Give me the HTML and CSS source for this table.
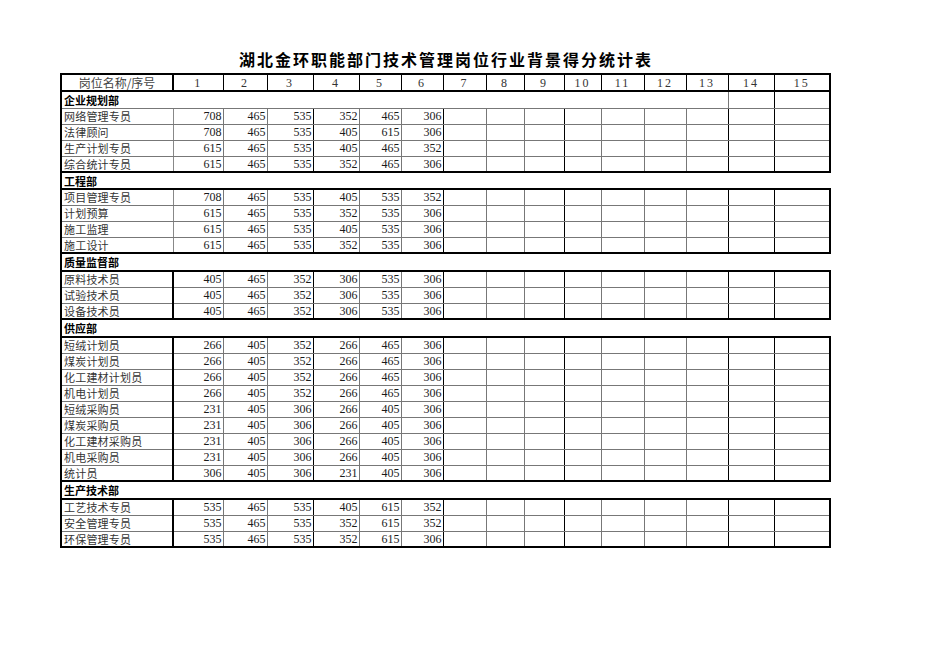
FILE: index.html
```
<!DOCTYPE html>
<html lang="zh-CN">
<head>
<meta charset="utf-8">
<title>湖北金环职能部门技术管理岗位行业背景得分统计表</title>
<link rel="stylesheet" href="styles.css">
</head>
<body>
<div class="page">
  <h1 class="title">湖北金环职能部门技术管理岗位行业背景得分统计表</h1>
  <table class="sheet">
    <colgroup>
      <col class="c-name"><col class="w50"><col class="w44"><col class="w46"><col class="w46"><col class="w42"><col class="w42"><col class="w43"><col class="w38"><col class="w40"><col class="w37"><col class="w43"><col class="w42"><col class="w42"><col class="w46"><col class="w56">
    </colgroup>
    <thead>
      <tr class="hrow">
        <th class="hname">岗位名称/序号</th>
        <th>1</th><th>2</th><th>3</th><th>4</th><th>5</th><th>6</th><th>7</th><th>8</th><th>9</th><th>10</th><th>11</th><th>12</th><th>13</th><th>14</th><th>15</th>
      </tr>
    </thead>
    <tbody class="thin">
      <tr class="srow first"><td colspan="14" class="sec">企业规划部</td><td></td><td></td></tr>
      <tr class="drow"><td class="n">网络管理专员</td><td>708</td><td>465</td><td>535</td><td>352</td><td>465</td><td>306</td><td></td><td></td><td></td><td></td><td></td><td></td><td></td><td></td><td></td></tr>
      <tr class="drow"><td class="n">法律顾问</td><td>708</td><td>465</td><td>535</td><td>405</td><td>615</td><td>306</td><td></td><td></td><td></td><td></td><td></td><td></td><td></td><td></td><td></td></tr>
      <tr class="drow"><td class="n">生产计划专员</td><td>615</td><td>465</td><td>535</td><td>405</td><td>465</td><td>352</td><td></td><td></td><td></td><td></td><td></td><td></td><td></td><td></td><td></td></tr>
      <tr class="drow last"><td class="n">综合统计专员</td><td>615</td><td>465</td><td>535</td><td>352</td><td>465</td><td>306</td><td></td><td></td><td></td><td></td><td></td><td></td><td></td><td></td><td></td></tr>
    </tbody>
    <tbody class="thin">
      <tr class="srow"><td colspan="16" class="sec open">工程部</td></tr>
      <tr class="drow"><td class="n">项目管理专员</td><td>708</td><td>465</td><td>535</td><td>405</td><td>535</td><td>352</td><td></td><td></td><td></td><td></td><td></td><td></td><td></td><td></td><td></td></tr>
      <tr class="drow"><td class="n">计划预算</td><td>615</td><td>465</td><td>535</td><td>352</td><td>535</td><td>306</td><td></td><td></td><td></td><td></td><td></td><td></td><td></td><td></td><td></td></tr>
      <tr class="drow"><td class="n">施工监理</td><td>615</td><td>465</td><td>535</td><td>405</td><td>535</td><td>306</td><td></td><td></td><td></td><td></td><td></td><td></td><td></td><td></td><td></td></tr>
      <tr class="drow last"><td class="n">施工设计</td><td>615</td><td>465</td><td>535</td><td>352</td><td>535</td><td>306</td><td></td><td></td><td></td><td></td><td></td><td></td><td></td><td></td><td></td></tr>
    </tbody>
    <tbody class="thick">
      <tr class="srow"><td colspan="16" class="sec open">质量监督部</td></tr>
      <tr class="drow"><td class="n">原料技术员</td><td>405</td><td>465</td><td>352</td><td>306</td><td>535</td><td>306</td><td></td><td></td><td></td><td></td><td></td><td></td><td></td><td></td><td></td></tr>
      <tr class="drow"><td class="n">试验技术员</td><td>405</td><td>465</td><td>352</td><td>306</td><td>535</td><td>306</td><td></td><td></td><td></td><td></td><td></td><td></td><td></td><td></td><td></td></tr>
      <tr class="drow last"><td class="n">设备技术员</td><td>405</td><td>465</td><td>352</td><td>306</td><td>535</td><td>306</td><td></td><td></td><td></td><td></td><td></td><td></td><td></td><td></td><td></td></tr>
    </tbody>
    <tbody class="thick">
      <tr class="srow"><td colspan="16" class="sec open">供应部</td></tr>
      <tr class="drow"><td class="n">短绒计划员</td><td>266</td><td>405</td><td>352</td><td>266</td><td>465</td><td>306</td><td></td><td></td><td></td><td></td><td></td><td></td><td></td><td></td><td></td></tr>
      <tr class="drow"><td class="n">煤炭计划员</td><td>266</td><td>405</td><td>352</td><td>266</td><td>465</td><td>306</td><td></td><td></td><td></td><td></td><td></td><td></td><td></td><td></td><td></td></tr>
      <tr class="drow"><td class="n">化工建材计划员</td><td>266</td><td>405</td><td>352</td><td>266</td><td>465</td><td>306</td><td></td><td></td><td></td><td></td><td></td><td></td><td></td><td></td><td></td></tr>
      <tr class="drow"><td class="n">机电计划员</td><td>266</td><td>405</td><td>352</td><td>266</td><td>465</td><td>306</td><td></td><td></td><td></td><td></td><td></td><td></td><td></td><td></td><td></td></tr>
      <tr class="drow"><td class="n">短绒采购员</td><td>231</td><td>405</td><td>306</td><td>266</td><td>405</td><td>306</td><td></td><td></td><td></td><td></td><td></td><td></td><td></td><td></td><td></td></tr>
      <tr class="drow"><td class="n">煤炭采购员</td><td>231</td><td>405</td><td>306</td><td>266</td><td>405</td><td>306</td><td></td><td></td><td></td><td></td><td></td><td></td><td></td><td></td><td></td></tr>
      <tr class="drow"><td class="n">化工建材采购员</td><td>231</td><td>405</td><td>306</td><td>266</td><td>405</td><td>306</td><td></td><td></td><td></td><td></td><td></td><td></td><td></td><td></td><td></td></tr>
      <tr class="drow"><td class="n">机电采购员</td><td>231</td><td>405</td><td>306</td><td>266</td><td>405</td><td>306</td><td></td><td></td><td></td><td></td><td></td><td></td><td></td><td></td><td></td></tr>
      <tr class="drow last"><td class="n">统计员</td><td>306</td><td>405</td><td>306</td><td>231</td><td>405</td><td>306</td><td></td><td></td><td></td><td></td><td></td><td></td><td></td><td></td><td></td></tr>
    </tbody>
    <tbody class="thick">
      <tr class="srow"><td colspan="16" class="sec open">生产技术部</td></tr>
      <tr class="drow"><td class="n">工艺技术专员</td><td>535</td><td>465</td><td>535</td><td>405</td><td>615</td><td>352</td><td></td><td></td><td></td><td></td><td></td><td></td><td></td><td></td><td></td></tr>
      <tr class="drow"><td class="n">安全管理专员</td><td>535</td><td>465</td><td>535</td><td>352</td><td>615</td><td>352</td><td></td><td></td><td></td><td></td><td></td><td></td><td></td><td></td><td></td></tr>
      <tr class="drow last"><td class="n">环保管理专员</td><td>535</td><td>465</td><td>535</td><td>352</td><td>615</td><td>306</td><td></td><td></td><td></td><td></td><td></td><td></td><td></td><td></td><td></td></tr>
    </tbody>
  </table>
</div>
</body>
</html>
```
FILE: styles.css
```
html, body {
  margin: 0;
  padding: 0;
  background: #fff;
}

.page {
  width: 769px;
  margin-left: 60px;
  padding-top: 49px;
}

.title {
  margin: 0 0 3px 0;
  height: 21px;
  line-height: 21px;
  text-align: center;
  font-family: "Noto Sans CJK SC", sans-serif;
  font-size: 16px;
  font-weight: 700;
  letter-spacing: 2px;
  padding-left: 3px;
  color: #000;
}

.sheet {
  border-collapse: collapse;
  table-layout: fixed;
  width: 769px;
  font-family: "Liberation Serif", "Noto Sans CJK SC", serif;
  color: #1a1a1a;
}

.c-name { width: 112px; }
.w50 { width: 50px; }
.w44 { width: 44px; }
.w46 { width: 46px; }
.w42 { width: 42px; }
.w43 { width: 43px; }
.w38 { width: 38px; }
.w40 { width: 40px; }
.w37 { width: 37px; }
.w56 { width: 56px; }

.sheet th,
.sheet td {
  padding: 0;
  border: 1px solid #777;
  white-space: nowrap;
  overflow: hidden;
  line-height: 14px;
}

/* header row */
.hrow { height: 17px; }
.hrow th {
  border: 1px solid #000;
  border-top: 2px solid #000;
  border-bottom: 2px solid #000;
  font-weight: 400;
  font-size: 12px;
  letter-spacing: 2px;
  text-align: center;
  color: #333;
}
.hrow th:first-child { border-left: 2px solid #000; border-right: 2px solid #000; }
.hrow th:last-child { border-right: 2px solid #000; }
.hname {
  font-family: "Noto Sans CJK SC", sans-serif;
  font-size: 13px;
  letter-spacing: 0 !important;
  color: #444 !important;
}

/* data rows */
.drow { height: 16px; }
.drow td {
  text-align: right;
  font-size: 12px;
  padding-right: 1px;
}
.drow td.n {
  text-align: left;
  padding: 0 0 0 2px;
  font-family: "Noto Sans CJK SC", sans-serif;
  font-size: 11px;
  letter-spacing: 0.2px;
  color: #333;
}
.drow td:first-child { border-left: 2px solid #000; }
.drow td:last-child { border-right: 2px solid #000; }
.drow td:nth-child(4),
.drow td:nth-child(7),
.drow td:nth-child(10),
.drow td:nth-child(14),
.drow td:nth-child(15) { border-right-color: #000; }
.drow.last td { border-bottom: 2px solid #000; }

.thick .drow td.n { border-right: 2px solid #000; }
.thin .drow td.n { border-right: 1px solid #888; }

/* section rows */
.srow { height: 17px; }
.thick .srow { height: 18px; }
.srow td {
  border-top: 2px solid #000;
  border-bottom: 2px solid #000;
}
.srow td.sec {
  border-left: 2px solid #000;
  padding-left: 2px;
  font-family: "Noto Sans CJK SC", sans-serif;
  font-size: 11px;
  font-weight: 700;
  color: #000;
  text-align: left;
}
.srow.first td { border-bottom: 1px solid #777; }
.srow.first td:last-child { border-right: 2px solid #000; }
.srow.first td:nth-child(2) { border-left-color: #000; border-right-color: #000; }
.srow td.open { border-right: none; }
```
